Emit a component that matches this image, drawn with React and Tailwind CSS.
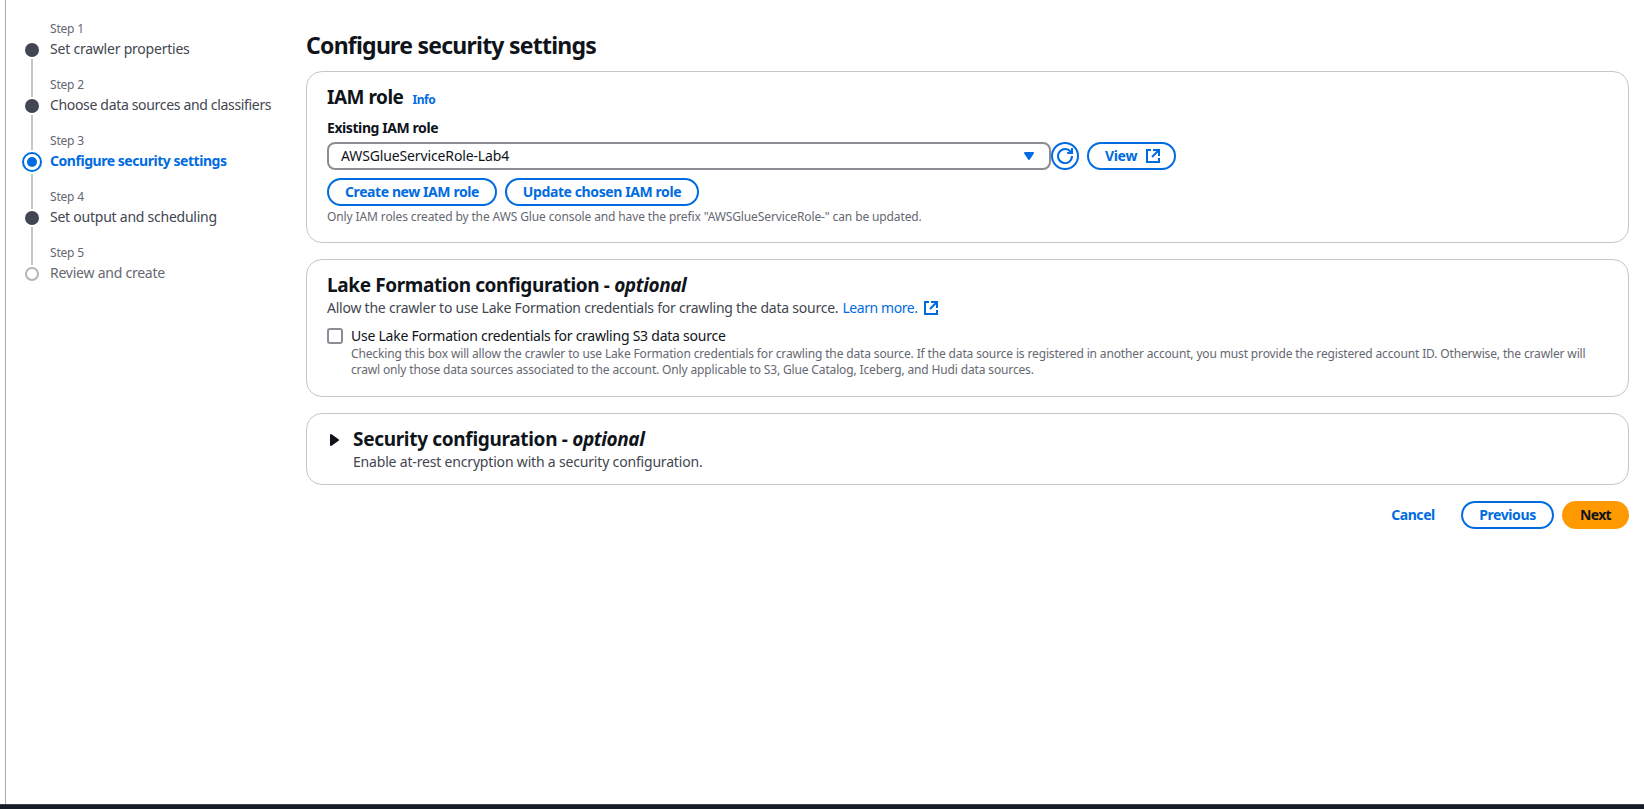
const steps = [
  { label: "Step 1", title: "Set crawler properties", cls: "text-[#424650] tracking-[-0.22px]" },
  { label: "Step 2", title: "Choose data sources and classifiers", cls: "text-[#424650] tracking-[-0.33px]" },
  { label: "Step 3", title: "Configure security settings", cls: "font-bold text-[#006ce0] tracking-[-0.46px]" },
  { label: "Step 4", title: "Set output and scheduling", cls: "text-[#424650] tracking-[-0.24px]" },
  { label: "Step 5", title: "Review and create", cls: "text-[#656871] tracking-[-0.24px]" },
];

function ExternalIcon() {
  return (
    <svg className="size-4 shrink-0" viewBox="0 0 16 16" fill="none" stroke="currentColor" strokeWidth="2">
      <path d="M6 2H2v12h12v-4" />
      <path d="M8 2h6v6" />
      <path d="M7 9l7-7" />
    </svg>
  );
}

function RefreshIcon() {
  return (
    <svg className="size-4 shrink-0" viewBox="0 0 16 16" fill="none" stroke="currentColor" strokeWidth="2">
      <path d="M15 8A7 7 0 1 1 13.6 3.9L14.6 5.2" />
      <path d="M10.2 5H15V0" />
    </svg>
  );
}

function Button({ children, className }) {
  return (
    <button className={`flex h-7 shrink-0 items-center justify-center rounded-full text-sm leading-5 font-bold whitespace-nowrap ${className}`}>
      {children}
    </button>
  );
}

function Card({ children, className }) {
  return <section className={`rounded-2xl border border-[#c6c6cd] px-5 pt-[13px] ${className}`}>{children}</section>;
}

function Dot() {
  return <span className="size-3.5 rounded-full bg-[#424650]" />;
}

function StepNav() {
  return (
    <nav className="flex w-[300px] shrink-0 pl-4">
      <div className="flex w-5 flex-col items-center gap-0.5 pt-[43px]">
        <Dot />
        <span className="h-[38px] w-0.5 bg-[#c6c6cd]" />
        <Dot />
        <span className="h-[35px] w-0.5 bg-[#c6c6cd]" />
        <span className="flex size-5 items-center justify-center rounded-full border-2 border-[#006ce0]">
          <span className="size-2.5 rounded-full bg-[#006ce0]" />
        </span>
        <span className="h-[35px] w-0.5 bg-[#c6c6cd]" />
        <Dot />
        <span className="h-[38px] w-0.5 bg-[#c6c6cd]" />
        <span className="size-3.5 rounded-full border-2 border-[#b4b4bb]" />
      </div>
      <ol className="flex flex-col gap-[18px] pt-[21px] pl-2">
        {steps.map((s) => (
          <li key={s.label} className="flex flex-col gap-0.5 whitespace-nowrap">
            <span className="text-xs leading-4 tracking-[-0.2px] text-[#656871]">{s.label}</span>
            <span className={`text-sm leading-5 ${s.cls}`}>{s.title}</span>
          </li>
        ))}
      </ol>
    </nav>
  );
}

export default function App() {
  return (
    <div className="flex h-screen flex-col overflow-hidden bg-white font-['Noto_Sans',sans-serif] text-[#0f141a]">
      <div className="flex min-h-0 flex-1 pl-[5px]">
        <div className="flex min-w-0 flex-1 border-l border-[#a9a9ae]">
          <StepNav />
          <main className="flex min-w-0 flex-1 flex-col pr-[15px]">
            <h1 className="pt-[30px] text-[23px] leading-[30px] font-bold tracking-[-0.75px]">Configure security settings</h1>

            <Card className="mt-[11px] h-[172px]">
              <div className="flex items-baseline gap-[9px]">
                <h2 className="text-[19px] leading-6 font-bold tracking-[-0.5px]">IAM role</h2>
                <a className="text-xs leading-4 font-bold tracking-[-0.4px] text-[#006ce0]">Info</a>
              </div>
              <div className="mt-[9px] text-sm leading-5 font-bold tracking-[-0.42px]">Existing IAM role</div>
              <div className="mt-1 flex">
                <div className="flex h-7 w-[724px] items-center justify-between rounded-lg border-2 border-[#8c8c94] pr-3 pl-3">
                  <span className="text-sm leading-5 tracking-[-0.13px]">AWSGlueServiceRole-Lab4</span>
                  <svg className="size-4" viewBox="0 0 16 16" fill="#006ce0" stroke="#006ce0" strokeWidth="2" strokeLinejoin="round">
                    <path d="M4 5h8l-4 6z" />
                  </svg>
                </div>
                <Button className="w-7 border-2 border-[#006ce0] text-[#006ce0]">
                  <RefreshIcon />
                </Button>
                <Button className="ml-2 w-[89px] gap-2 border-2 border-[#006ce0] pl-[3px] tracking-[-0.3px] text-[#006ce0]">
                  View
                  <ExternalIcon />
                </Button>
              </div>
              <div className="mt-2 flex gap-2">
                <Button className="w-[170px] border-2 border-[#006ce0] tracking-[-0.41px] text-[#006ce0]">Create new IAM role</Button>
                <Button className="w-[194px] border-2 border-[#006ce0] tracking-[-0.4px] text-[#006ce0]">Update chosen IAM role</Button>
              </div>
              <p className="mt-[3px] text-xs leading-4 tracking-[-0.12px] text-[#656871]">
                Only IAM roles created by the AWS Glue console and have the prefix "AWSGlueServiceRole-" can be updated.
              </p>
            </Card>

            <Card className="mt-4 h-[138px]">
              <h2 className="text-[19px] leading-6 font-bold tracking-[-0.38px]">
                Lake Formation configuration - <i className="tracking-[-0.4px]">optional</i>
              </h2>
              <p className="mt-px flex items-center text-sm leading-5 tracking-[-0.23px] text-[#424650]">
                Allow the crawler to use Lake Formation credentials for crawling the data source.
                <a className="ml-1 flex items-center gap-[5px] tracking-[-0.42px] text-[#006ce0]">
                  Learn more.
                  <ExternalIcon />
                </a>
              </p>
              <div className="mt-2 flex gap-2">
                <span className="mt-0.5 size-4 shrink-0 rounded-[3px] border-2 border-[#8c8c94]" />
                <div className="whitespace-nowrap">
                  <div className="text-sm leading-5 tracking-[-0.24px]">Use Lake Formation credentials for crawling S3 data source</div>
                  <div className="text-xs leading-4 tracking-[-0.145px] text-[#656871]">
                    Checking this box will allow the crawler to use Lake Formation credentials for crawling the data source. If the data source is
                    registered in another account, you must provide the registered account ID. Otherwise, the crawler will
                    <br />
                    crawl only those data sources associated to the account. Only applicable to S3, Glue Catalog, Iceberg, and Hudi data sources.
                  </div>
                </div>
              </div>
            </Card>

            <Card className="mt-4 flex h-[72px] gap-2.5">
              <svg className="mt-[5px] size-4 shrink-0" viewBox="0 0 16 16" fill="#0f141a" stroke="#0f141a" strokeWidth="2" strokeLinejoin="round">
                <path d="M4 3v10l7-5z" />
              </svg>
              <div>
                <h2 className="text-[19px] leading-6 font-bold tracking-[-0.32px]">
                  Security configuration - <i className="tracking-[-0.4px]">optional</i>
                </h2>
                <p className="mt-px text-sm leading-5 tracking-[-0.18px] text-[#424650]">Enable at-rest encryption with a security configuration.</p>
              </div>
            </Card>

            <div className="mt-4 flex justify-end">
              <Button className="mr-2 w-20 tracking-[-0.45px] text-[#006ce0]">Cancel</Button>
              <Button className="mr-2 w-[93px] border-2 border-[#006ce0] tracking-[-0.4px] text-[#006ce0]">Previous</Button>
              <Button className="w-[67px] bg-[#ff9900] tracking-[-0.65px]">Next</Button>
            </div>
          </main>
        </div>
      </div>
      <footer className="h-[5px] shrink-0 border-t border-[#3c434d] bg-[#161d26]" />
    </div>
  );
}
